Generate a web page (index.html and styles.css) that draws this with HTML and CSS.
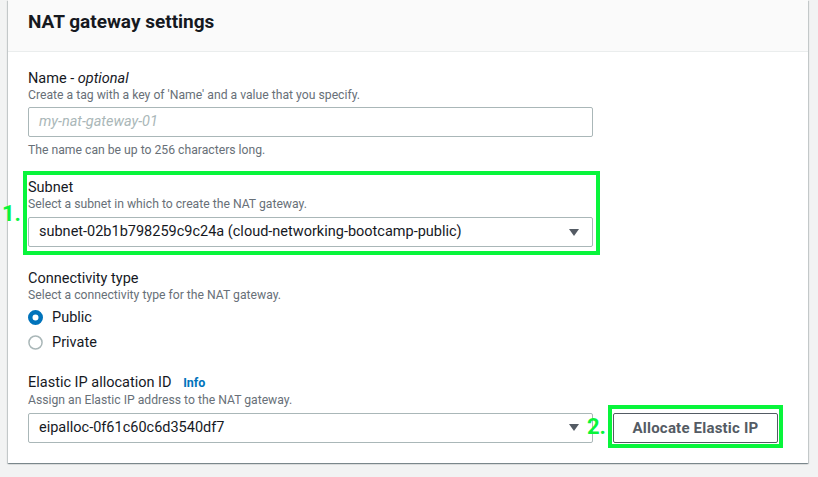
FILE: index.html
```html
<!DOCTYPE html>
<html lang="en">
<head>
<meta charset="utf-8">
<title>NAT gateway settings</title>
<link rel="stylesheet" href="styles.css">
</head>
<body>
<div class="page">
  <section class="card">
    <header class="card-header">
      <h2 class="card-title">NAT gateway settings</h2>
    </header>
    <div class="card-body">
      <div class="field field-name">
        <div class="label">Name - <i>optional</i></div>
        <div class="desc">Create a tag with a key of 'Name' and a value that you specify.</div>
        <div class="input placeholder">my-nat-gateway-01</div>
        <div class="hint">The name can be up to 256 characters long.</div>
      </div>

      <div class="field field-subnet">
        <div class="label">Subnet</div>
        <div class="desc">Select a subnet in which to create the NAT gateway.</div>
        <div class="select">
          <span class="select-value">subnet-02b1b798259c9c24a (cloud-networking-bootcamp-public)</span>
          <svg class="caret" width="10" height="7" viewBox="0 0 10 7"><path d="M0 0H10L5 7Z" fill="#545b64"/></svg>
        </div>
      </div>

      <div class="field field-conn">
        <div class="label">Connectivity type</div>
        <div class="desc">Select a connectivity type for the NAT gateway.</div>
        <div class="radios">
          <div class="radio">
            <svg class="radio-icon" width="15" height="15" viewBox="0 0 16 16"><circle cx="8" cy="8" r="5.6" fill="#fff" stroke="#0073bb" stroke-width="4.8"/></svg>
            <span>Public</span>
          </div>
          <div class="radio">
            <svg class="radio-icon" width="15" height="15" viewBox="0 0 16 16"><circle cx="8" cy="8" r="7" fill="#fff" stroke="#aab7b8" stroke-width="1.6"/></svg>
            <span>Private</span>
          </div>
        </div>
      </div>

      <div class="field field-eip">
        <div class="label">Elastic IP allocation ID <span class="info">Info</span></div>
        <div class="desc">Assign an Elastic IP address to the NAT gateway.</div>
        <div class="eip-row">
          <div class="select">
            <span class="select-value">eipalloc-0f61c60c6d3540df7</span>
            <svg class="caret" width="10" height="7" viewBox="0 0 10 7"><path d="M0 0H10L5 7Z" fill="#545b64"/></svg>
          </div>
          <button class="btn">Allocate Elastic IP</button>
        </div>
      </div>
    </div>
  </section>

  <div class="annot-box box-1"></div>
  <span class="annot-num num-1">1.</span>
  <div class="annot-box box-2"></div>
  <span class="annot-num num-2">2.</span>
</div>
</body>
</html>
```

FILE: styles.css
```css
html, body {
  margin: 0;
  padding: 0;
}

body {
  background: #f2f3f3;
  font-family: Roboto, "Liberation Sans", Arial, sans-serif;
  color: #16191f;
}

.page {
  position: relative;
  width: 818px;
  height: 477px;
  overflow: hidden;
  padding-left: 8px;
  box-sizing: border-box;
}

.card {
  width: 800px;
  background: #fff;
  box-shadow: 0 1px 1px 0 rgba(0, 28, 36, 0.3),
              1px 1px 1px 0 rgba(0, 28, 36, 0.15),
              -1px 1px 1px 0 rgba(0, 28, 36, 0.15);
}

.card-header {
  height: 52px;
  box-sizing: border-box;
  background: #fafafa;
  border-bottom: 1px solid #eaeded;
  padding: 9px 20px 0;
}

.card-title {
  margin: 0;
  font-size: 19px;
  line-height: 26px;
  font-weight: 700;
  color: #16191f;
}

.card-body {
  padding: 15px 20px 20px;
}

.label {
  font-size: 14.5px;
  line-height: 20px;
  padding-top: 1.5px;
  margin-bottom: -1.5px;
}

.desc,
.hint {
  font-size: 12.2px;
  line-height: 16px;
  color: #687078;
}

.input,
.select {
  width: 565px;
  height: 30px;
  box-sizing: border-box;
  border: 1px solid #aab7b8;
  border-radius: 2px;
  padding: 0 13px 0 10px;
  font-size: 14.5px;
  line-height: 28px;
  color: #16191f;
}

.input {
  margin-top: 4px;
}

.placeholder {
  color: #aab7b8;
  font-style: italic;
}

.hint {
  margin-top: 5px;
}

.select {
  display: flex;
  align-items: center;
  justify-content: space-between;
  margin-top: 5px;
}

.select-value {
  white-space: nowrap;
}

.caret {
  flex: none;
  display: block;
}

.field-subnet {
  margin-top: 18px;
}

.field-conn,
.field-eip {
  margin-top: 20px;
}

.field-eip {
  margin-top: 19px;
}

.radios {
  margin-top: 4.5px;
  display: flex;
  flex-direction: column;
  gap: 5px;
}

.radio {
  display: flex;
  align-items: center;
  font-size: 14.5px;
  line-height: 20px;
}

.radio-icon {
  display: block;
  margin-right: 9px;
}

.info {
  margin-left: 8px;
  font-size: 12.5px;
  font-weight: 700;
  color: #0073bb;
}

.eip-row {
  display: flex;
  align-items: flex-start;
  gap: 20px;
  margin-top: 5px;
}

.eip-row .select {
  margin-top: 0;
}

.btn {
  width: 165px;
  height: 30px;
  box-sizing: border-box;
  padding: 0;
  background: #fff;
  border: 1px solid #545b64;
  border-radius: 2px;
  font-family: Roboto, "Liberation Sans", Arial, sans-serif;
  font-size: 15px;
  font-weight: 700;
  color: #545b64;
  letter-spacing: 0.2px;
}

/* annotations drawn over the screenshot */
.annot-box {
  position: absolute;
  box-sizing: border-box;
  border: 4px solid #08f53b;
}

.box-1 {
  left: 23px;
  top: 171px;
  width: 577px;
  height: 84px;
}

.box-2 {
  left: 608px;
  top: 405px;
  width: 175px;
  height: 43px;
}

.annot-num {
  position: absolute;
  font-size: 22px;
  line-height: 22px;
  font-weight: 700;
  color: #08f53b;
}

.num-1 {
  left: 2px;
  top: 203px;
}

.num-2 {
  left: 587px;
  top: 416px;
}
```
